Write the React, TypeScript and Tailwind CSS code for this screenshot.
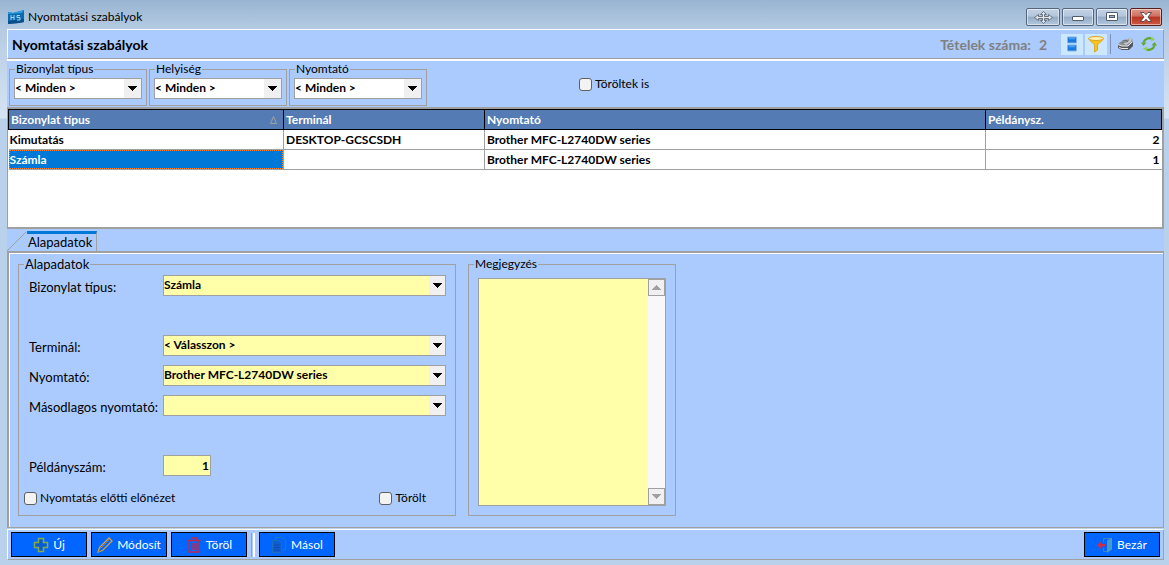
import { useState, type ReactNode } from "react";
import { clsx } from "clsx";

type Rule = {
  type: string;
  terminal: string;
  printer: string;
  copies: number;
};

const RULES: Rule[] = [
  { type: "Kimutatás", terminal: "DESKTOP-GCSCSDH", printer: "Brother MFC-L2740DW series", copies: 2 },
  { type: "Számla", terminal: "", printer: "Brother MFC-L2740DW series", copies: 1 },
];

const FILTERS = ["Bizonylat típus", "Helyiség", "Nyomtató"];

function AppLogo() {
  return (
    <svg width="16" height="16" viewBox="0 0 16 16" aria-hidden="true">
      <path d="M0 3l5 1 11-3v12l-5 1-11 1z" fill="#0b6ab0" />
      <path d="M0 3l5 1 11-3-2 3-14 1z" fill="#2d9be0" />
      <path d="M0 12l16-2v3l-5 1-11 1z" fill="#0a4f8c" />
      <path d="M3 6v5M6 6v5M3 8.500h3M12 6.500H9v2h3v2.500H9" fill="none" stroke="#9fd6f7" strokeWidth="1" />
    </svg>
  );
}

function Arrow({ up = false }: { up?: boolean }) {
  return (
    <svg width="9" height="5" viewBox="0 0 9 5" shapeRendering="crispEdges" aria-hidden="true">
      <path d={up ? "M0 5h9L4.500 0z" : "M0 0h9L4.500 5z"} fill="currentColor" />
    </svg>
  );
}

function WindowButton({ label, className, children }: { label: string; className: string; children: ReactNode }) {
  return (
    <button
      type="button"
      aria-label={label}
      className={clsx(
        "flex h-[18px] items-center justify-center rounded-[2px] border shadow-[inset_0_0_0_1px_rgba(255,255,255,0.5)]",
        className,
      )}
    >
      {children}
    </button>
  );
}

const GLASS = "border-[#56677d] bg-[linear-gradient(180deg,#c3d3e6_0%,#b3c6dc_45%,#94abc6_50%,#b2c8df_100%)]";

function TitleBar() {
  return (
    <div className="flex h-[29px] items-center pt-[5px] pl-px">
      <AppLogo />
      <span className="ml-1 flex-1 text-[12px] leading-4">Nyomtatási szabályok</span>
      <div className="flex gap-0.5 pr-0.5">
        <WindowButton label="Áthelyezés" className={clsx("w-[34px]", GLASS)}>
          <svg width="19" height="13" viewBox="0 0 19 13" aria-hidden="true">
            <path
              d="M9.500.5l3 3h-2v2h4v-2l4 3-4 3v-2h-4v2h2l-3 3-3-3h2v-2h-4v2l-4-3 4-3v2h4v-2h-2z"
              fill="#e4e4e4"
              stroke="#525c6a"
              strokeWidth="0.800"
            />
          </svg>
        </WindowButton>
        <WindowButton label="Kis méret" className={clsx("w-8", GLASS)}>
          <svg width="12" height="12" viewBox="0 0 12 12" aria-hidden="true">
            <rect x="0.500" y="5.500" width="11" height="4" rx="0.500" fill="#fff" stroke="#525c6a" />
          </svg>
        </WindowButton>
        <WindowButton label="Teljes méret" className={clsx("w-8", GLASS)}>
          <svg width="12" height="10" viewBox="0 0 12 10" aria-hidden="true">
            <rect x="0.500" y="0.500" width="11" height="8" rx="0.500" fill="#fff" stroke="#525c6a" />
            <rect x="3.500" y="3.500" width="5" height="2" fill="#9fb4cd" stroke="#525c6a" />
          </svg>
        </WindowButton>
        <WindowButton
          label="Bezárás"
          className="w-8 border-[#5a1f1c] bg-[linear-gradient(180deg,#dd9a8e_0%,#cf6f60_45%,#b83420_50%,#cb5a42_100%)]"
        >
          <svg width="12" height="10" viewBox="0 0 12 10" aria-hidden="true">
            <path
              d="M.5.500h3.500l2 2.300 2-2.300h3.500L8 5l3.500 4.500H8L6 7.200 4 9.500H.500L4 5z"
              fill="#fff"
              stroke="#5a4148"
              strokeWidth="0.900"
            />
          </svg>
        </WindowButton>
      </div>
    </div>
  );
}

function Header() {
  return (
    <header className="flex h-[30px] items-center border border-t-white border-r-[#a0a0a0] border-b-[#a0a0a0] border-l-white bg-[#abcbfe] pr-1.5 pl-1">
      <h1 className="flex-1 text-[14px] font-bold">Nyomtatási szabályok</h1>
      <p className="mr-[14px] flex gap-2 text-[14px] font-bold text-[#808080]">
        <span>Tételek száma:</span>
        <span>{RULES.length}</span>
      </p>
      <button type="button" aria-label="Nézet" className="flex h-[21px] w-[22px] items-center justify-center bg-[#cce8ff]">
        <svg width="12" height="16" viewBox="0 0 12 16" aria-hidden="true">
          <path d="M1.500 1h9v6h-9zM1.500 9h9v6h-9z" fill="#1878e0" stroke="#8ab4e8" strokeWidth="1" />
          <path d="M3 2.500h6M3 10.500h6" stroke="#4aa0f4" strokeWidth="1.500" />
        </svg>
      </button>
      <button type="button" aria-label="Szűrő" className="ml-0.5 flex h-[21px] w-[22px] items-center justify-center bg-[#cce8ff]">
        <svg width="18" height="18" viewBox="0 0 18 18" aria-hidden="true">
          <path d="M1.500 3.500C3 7 7 8 7.500 10v7l3-2v-5c.5-2 4.500-3 6-6.500z" fill="#fbc517" stroke="#dc9a12" strokeWidth="0.800" />
          <ellipse cx="9" cy="3.500" rx="7.500" ry="2" fill="#fdf0b8" stroke="#e0a31a" />
        </svg>
      </button>
      <span className="ml-[3px] h-5 w-px bg-[#7e93b5]" />
      <button type="button" aria-label="Nyomtatás" className="ml-1.5">
        <svg width="17" height="16" viewBox="0 0 17 16" aria-hidden="true">
          <path d="M1 8l5-4 9-2 1 6-4 5-7 1-4-2z" fill="#8c8f94" />
          <path d="M5 6l5-3 5-1-1 4-5 3z" fill="#c3c6cb" />
          <path d="M1 9l4 1 6 0 5-4v4l-4 4-7 0-4-2z" fill="#55585e" />
          <path d="M1 8.500l4 1.500h6l4-4M2 11.500l3 1h6" fill="none" stroke="#e9eaec" />
          <path d="M6 5l6-1M5 6.500l6-1" stroke="#66696e" />
        </svg>
      </button>
      <button type="button" aria-label="Frissítés" className="ml-[7px]">
        <svg width="16" height="16" viewBox="0 0 16 16" aria-hidden="true">
          <g fill="none" stroke="#5fa832" strokeWidth="2.200">
            <path d="M2.500 6.500A6 6 0 0 1 11 2.800" />
            <path d="M13.500 9.500A6 6 0 0 1 5 13.200" />
          </g>
          <path d="M0 6.500h5.500L2.500 10zM16 9.500h-5.500L13.500 6z" fill="#5fa832" />
          <path d="M10 .5l4 3-4 2zM6 15.500l-4-3 4-2z" fill="#8fd05c" />
        </svg>
      </button>
    </header>
  );
}

function FilterSelect({ label }: { label: string }) {
  return (
    <fieldset className="h-[44px] w-[138px] border border-[#a0a0a0] px-1">
      <legend className="ml-px h-[14px] px-px text-[12px] leading-[14px]">{label}</legend>
      <div className="relative mt-0.5">
        <select
          aria-label={label}
          className="block h-[21px] w-full appearance-none border border-[#a0a0a0] bg-white pb-0.5 text-[12px] font-bold"
        >
          <option>{"< Minden >"}</option>
        </select>
        <span className="pointer-events-none absolute top-px right-px flex h-[19px] w-[17px] items-center justify-center bg-[#f0f0f0] text-black">
          <Arrow />
        </span>
      </div>
    </fieldset>
  );
}

function RulesTable() {
  const [selected, setSelected] = useState(1);

  return (
    <div className="h-[122px] border-2 border-l border-[#a0a0a0] bg-white">
      <table className="w-full table-fixed border-collapse text-[12px] font-bold">
        <colgroup>
          <col className="w-[275px]" />
          <col className="w-[201px]" />
          <col />
          <col className="w-[176px]" />
        </colgroup>
        <thead>
          <tr className="h-5 bg-[#547bb4] text-left text-white">
            <th className="border border-black px-0.5 py-0">
              <span className="flex items-center justify-between pr-1">
                Bizonylat típus
                <svg width="7" height="8" viewBox="0 0 7 8" aria-hidden="true">
                  <path d="M.5 7.500h6L3.500.500z" fill="none" stroke="#a0a0a0" />
                </svg>
              </span>
            </th>
            <th className="border border-black px-0.5 py-0">Terminál</th>
            <th className="border border-black px-0.5 py-0">Nyomtató</th>
            <th className="border border-black px-0.5 py-0">Példánysz.</th>
          </tr>
        </thead>
        <tbody>
          {RULES.map((rule, index) => (
            <tr key={rule.type} className="h-5" onClick={() => setSelected(index)}>
              <td className="border-r border-b border-[#a0a0a0] p-0">
                <div
                  className={clsx(
                    "h-[19px] border leading-[17px]",
                    index === selected ? "border-dotted border-[#ff8728] bg-[#0078d7] text-white" : "border-transparent",
                  )}
                >
                  {rule.type}
                </div>
              </td>
              <td className="border-r border-b border-[#a0a0a0] px-0.5 py-0">{rule.terminal}</td>
              <td className="border-r border-b border-[#a0a0a0] px-0.5 py-0">{rule.printer}</td>
              <td className="border-b border-[#a0a0a0] px-0.5 py-0 text-right">{rule.copies}</td>
            </tr>
          ))}
        </tbody>
      </table>
    </div>
  );
}

function Field({ id, label, children }: { id: string; label: string; children: ReactNode }) {
  return (
    <div className="flex h-[30px] items-start">
      <label htmlFor={id} className="w-[134px] shrink-0 pt-1 text-[13px] leading-4 whitespace-nowrap">
        {label}
      </label>
      {children}
    </div>
  );
}

function FormSelect({ id, label, value }: { id: string; label: string; value: string }) {
  return (
    <Field id={id} label={label}>
      <div className="relative flex-1">
        <select
          id={id}
          className="block h-[21px] w-full appearance-none border border-[#a0a0a0] bg-[#ffffaa] pb-0.5 text-[12px] font-bold"
        >
          <option>{value}</option>
        </select>
        <span className="pointer-events-none absolute top-px right-px flex h-[19px] w-4 items-center justify-center bg-[#f0f0f0] text-black">
          <Arrow />
        </span>
      </div>
    </Field>
  );
}

function Check({ label }: { label: string }) {
  return (
    <label className="flex items-center gap-[3px] text-[12px] leading-4">
      <input
        type="checkbox"
        className="size-[13px] appearance-none rounded-[3px] border border-[#5f5f5f] bg-[#f3f3f3] checked:bg-[#0078d7]"
      />
      {label}
    </label>
  );
}

function DetailPanel() {
  return (
    <section className="flex flex-1 flex-col pt-0.5">
      <div className="flex h-5" role="tablist">
        <svg width="20" height="20" viewBox="0 0 20 20" aria-hidden="true">
          <path d="M0 20L19 1" stroke="#a0a0a0" />
        </svg>
        <button
          type="button"
          role="tab"
          aria-selected="true"
          className="h-5 border-t-3 border-r border-t-[#0078d7] border-r-[#a0a0a0] pr-1 pl-px text-[13px] leading-[17px]"
        >
          Alapadatok
        </button>
      </div>
      <div className="flex flex-1 items-start gap-3 border-2 border-r border-b border-[#a0a0a0] pt-1 pl-[9px] shadow-[inset_1px_1px_0_#fff]">
        <fieldset className="h-[259px] w-[438px] border border-[#a0a0a0] pr-[9px] pl-[5px]">
          <legend className="h-[14px] px-px text-[13px] leading-[14px]">Alapadatok</legend>
          <div className="mt-1 pl-[5px]">
            <FormSelect id="type" label="Bizonylat típus:" value="Számla" />
            <div className="mt-[30px]">
              <FormSelect id="terminal" label="Terminál:" value="< Válasszon >" />
              <FormSelect id="printer" label="Nyomtató:" value="Brother MFC-L2740DW series" />
              <FormSelect id="printer2" label="Másodlagos nyomtató:" value="" />
            </div>
            <div className="mt-[30px]">
              <Field id="copies" label="Példányszám:">
                <input
                  id="copies"
                  defaultValue="1"
                  className="h-[21px] w-12 border border-[#a0a0a0] bg-[#ffffaa] px-px text-right text-[12px] font-bold"
                />
              </Field>
            </div>
          </div>
          <div className="mt-[5px] flex justify-between pr-5">
            <Check label="Nyomtatás előtti előnézet" />
            <Check label="Törölt" />
          </div>
        </fieldset>
        <fieldset className="h-[259px] w-[208px] border border-[#a0a0a0] px-[9px]">
          <legend className="-ml-1 h-[14px] px-px text-[12px] leading-[14px]">
            <label htmlFor="note">Megjegyzés</label>
          </legend>
          <div className="mt-[7px] flex h-[228px] border border-[#a0a0a0]">
            <textarea id="note" className="min-w-0 flex-1 resize-none bg-[#ffffaa] p-0.5 text-[12px] outline-none" />
            <div className="flex w-[17px] flex-col justify-between bg-[#f8f8f8] text-[#a0a0a0]">
              <span className="flex h-[17px] items-center justify-center border border-[#a0a0a0] bg-[#f0f0f0]">
                <Arrow up />
              </span>
              <span className="flex h-[17px] items-center justify-center border border-[#a0a0a0] bg-[#f0f0f0]">
                <Arrow />
              </span>
            </div>
          </div>
        </fieldset>
      </div>
    </section>
  );
}

function ActionButton({ label, children }: { label: string; children: ReactNode }) {
  return (
    <button
      type="button"
      className="flex h-[25px] w-[76px] items-center justify-center gap-1 border border-black bg-[#0066ff] text-[12px] text-white"
    >
      {children}
      {label}
    </button>
  );
}

function Footer() {
  return (
    <footer className="mt-px flex h-[31px] items-center gap-1 border border-t-white border-r-[#a0a0a0] border-b-[#a0a0a0] border-l-white bg-[#abcbfe] px-[3px]">
      <ActionButton label="Új">
        <svg width="16" height="16" viewBox="0 0 16 16" aria-hidden="true">
          <path
            d="M5.500 1.500h5v4h4v5h-4v4h-5v-4h-4v-5h4z"
            fill="#0a5ad0"
            stroke="#7fae48"
            strokeWidth="1.500"
          />
        </svg>
      </ActionButton>
      <ActionButton label="Módosít">
        <svg width="16" height="16" viewBox="0 0 16 16" aria-hidden="true">
          <path d="M1 15l1.500-4.500L12 1l3 3-9.500 9.500z" fill="none" stroke="#d9a13c" strokeWidth="1.300" />
          <path d="M3.500 11.500L12 3M1 15l2-1" stroke="#8c7c62" />
        </svg>
      </ActionButton>
      <ActionButton label="Töröl">
        <svg width="16" height="16" viewBox="0 0 16 16" aria-hidden="true">
          <path d="M1.500 3.500h13M5.500 3V1h5v2M3 4v11h10V4M6 6v7M8 6v7M10 6v7" fill="none" stroke="#c0284c" strokeWidth="1.300" />
        </svg>
      </ActionButton>
      <span className="h-6 w-1 border-r-2 border-l border-r-white border-l-[#a0a0a0]" />
      <ActionButton label="Másol">
        <svg width="16" height="16" viewBox="0 0 16 16" aria-hidden="true">
          <path d="M4.500 3V.500h7l3 3V13H12" fill="none" stroke="#1f78c8" />
          <path d="M1.500 3.500h6l3 3v9h-9z" fill="#0d5cd8" stroke="#1f6fb8" />
          <path d="M3.500 8h5M3.500 10.500h5M3.500 13h5" stroke="#174a96" />
        </svg>
      </ActionButton>
      <div className="ml-auto">
        <ActionButton label="Bezár">
          <svg width="16" height="16" viewBox="0 0 16 16" aria-hidden="true">
            <path d="M6.500 5V1.500h8M6.500 11v3.500h4" fill="none" stroke="#3a86c4" />
            <path d="M10 3.500l5-3v12l-5 3.500z" fill="#4a9ac8" />
            <path d="M0 8l4-3.500v2.500h4v2.500H4v2.500z" fill="#d02c4c" />
          </svg>
        </ActionButton>
      </div>
    </footer>
  );
}

export default function App() {
  return (
    <div className="flex min-h-screen flex-col bg-[#b9d1ea] bg-[linear-gradient(180deg,#99b4d1_0px,#b5cbe3_29px,#d5e4f3_118px,#b9d1ea_119px)] pr-[5px] pb-[5px] pl-[7px] font-['Lato',sans-serif] text-black">
      <TitleBar />
      <Header />
      <main className="flex flex-1 flex-col border-t-2 border-t-white bg-[#abcbfe]">
        <div className="flex h-[46px] items-start gap-0.5 pt-px pl-0.5">
          {FILTERS.map((label) => (
            <FilterSelect key={label} label={label} />
          ))}
          <div className="ml-[150px] pt-[14px]">
            <Check label="Töröltek is" />
          </div>
        </div>
        <RulesTable />
        <DetailPanel />
      </main>
      <Footer />
    </div>
  );
}
